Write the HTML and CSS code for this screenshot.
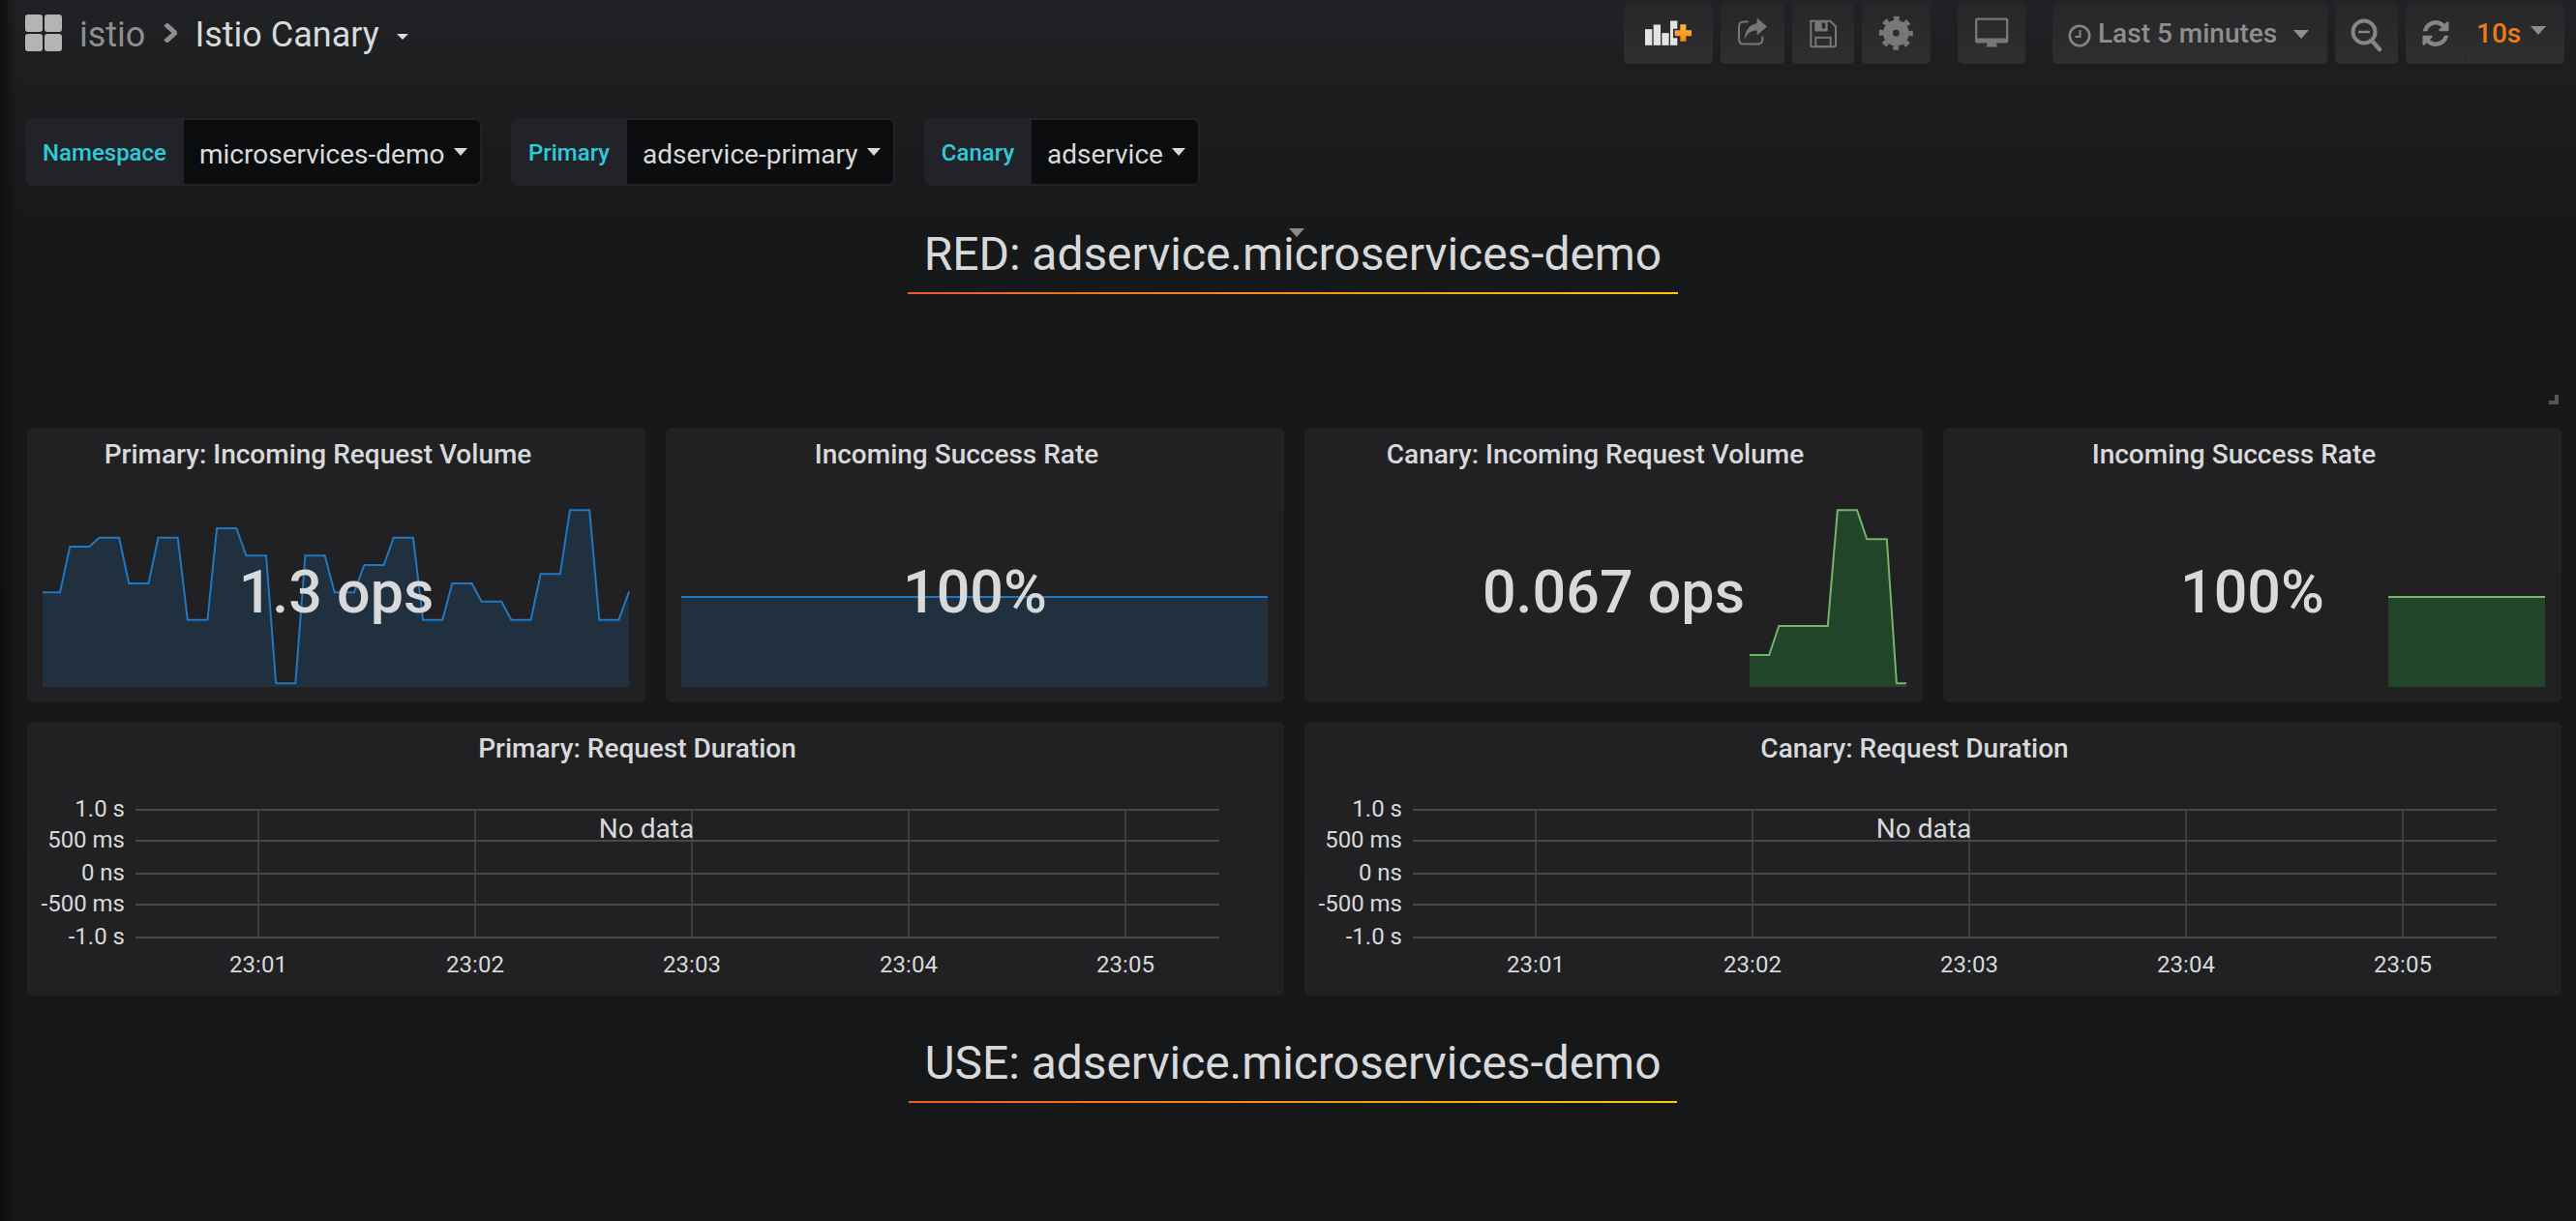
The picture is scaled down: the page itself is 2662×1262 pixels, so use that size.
FILE: index.html
```html
<!DOCTYPE html>
<html lang="en">
<head>
<meta charset="utf-8">
<title>Istio Canary</title>
<link rel="stylesheet" href="styles.css">
</head>
<body>
<header class="navbar">
  <div class="crumbs">
    <svg class="logo" viewBox="0 0 38 38"><rect x="0" y="0" width="18" height="18" rx="3"/><rect x="20" y="0" width="18" height="18" rx="3"/><rect x="0" y="20" width="18" height="18" rx="3"/><rect x="20" y="20" width="18" height="18" rx="3"/></svg>
    <span class="crumb-folder">istio</span>
    <svg class="crumb-chevron" viewBox="0 0 14 20"><path d="M2 1l10 9-10 9" /></svg>
    <span class="crumb-title">Istio Canary</span>
    <span class="caret crumb-caret"></span>
  </div>
  <div class="actions">
    <button class="btn btn-add"><svg viewBox="24 6 276 191"><g fill="#e3e3e3"><rect x="90" y="90" width="22" height="50"/><rect x="116" y="76" width="22" height="64"/><rect x="142" y="102" width="22" height="38"/><rect x="168" y="64" width="22" height="76"/></g><path d="M194 72h28v17h15v28h-15v15h-28v-15h-17v-28h17z" fill="#2b2b2e"/><path d="M199 75h18v18h17v18h-17v17h-18v-17h-17v-18h17z" fill="url(#plus)"/><defs><linearGradient id="plus" x1="0" y1="0" x2="0" y2="1"><stop offset="0" stop-color="#ffb53f"/><stop offset="1" stop-color="#f58a12"/></linearGradient></defs></svg></button>
    <button class="btn btn-share"><svg viewBox="324 6 198 191"><path d="M410 67h-14q-15 0-15 15v39q0 15 15 15h43q15 0 15-15v-9" fill="none" stroke="#777" stroke-width="6"/><path d="M437 55l31 27-31 27V94c-20-1-31 10-39 30 1-28 14-50 39-52z" fill="#777"/></svg></button>
    <button class="btn btn-save"><svg viewBox="546 6 192 191"><path d="M604 65h60l17 17v58q0 4-4 4h-70q-3 0-3-3z" fill="none" stroke="#777" stroke-width="6"/><path d="M616 66h40v28q0 3-3 3h-34q-3 0-3-3z" fill="#777"/><rect x="638" y="70" width="11" height="18" fill="#2b2b2e"/><rect x="619" y="116" width="46" height="28" fill="none" stroke="#777" stroke-width="6"/></svg></button>
    <button class="btn btn-gear"><svg viewBox="762 6 213 191"><circle cx="868" cy="102" r="25" fill="none" stroke="#777" stroke-width="30"/><circle cx="868" cy="102" r="44" fill="none" stroke="#777" stroke-width="17" stroke-dasharray="17 17.56" stroke-dashoffset="8.5"/></svg></button>
    <button class="btn btn-tv"><svg viewBox="1059 6 210 191"><rect x="1113" y="55" width="103" height="78" rx="7" fill="#777"/><rect x="1120" y="62" width="89" height="56" fill="#2b2b2e"/><path d="M1150 130h30v10l3 5h-36l3-5z" fill="#777"/></svg></button>
    <button class="btn btn-time">
      <svg class="clock" viewBox="0 0 24 24"><circle cx="12" cy="12" r="10.2" fill="none" stroke="#858585" stroke-width="2.6"/><path d="M12.5 6v7H7.5" fill="none" stroke="#858585" stroke-width="2"/></svg>
      <span class="time-label">Last 5 minutes</span>
      <span class="caret time-caret"></span>
    </button>
    <button class="btn btn-zoom"><svg viewBox="0 0 65 64"><circle cx="30" cy="31" r="11.5" fill="none" stroke="#858585" stroke-width="4"/><path d="M38 40l8 9" stroke="#858585" stroke-width="4.5" stroke-linecap="round"/><path d="M24 31h12" stroke="#858585" stroke-width="2.5"/></svg></button>
    <div class="btn btn-refresh">
      <button class="refresh-icon"><svg viewBox="128 128 1536 1536"><path fill="#858585" d="M1639 1056q0 5-1 7-64 268-268 434.5t-478 166.5q-146 0-282.5-55t-243.5-157l-129 129q-19 19-45 19t-45-19-19-45v-448q0-26 19-45t45-19h448q26 0 45 19t19 45-19 45l-137 137q71 66 161 102t187 36q134 0 250-65t186-179q11-17 53-117 8-23 30-23h192q13 0 22.5 9.5t9.5 22.5zm25-800v448q0 26-19 45t-45 19h-448q-26 0-45-19t-19-45 19-45l138-138q-148-137-349-137-134 0-250 65t-186 179q-11 17-53 117-8 23-30 23h-199q-13 0-22.5-9.5t-9.5-22.5v-7q65-268 270-434.5t480-166.5q146 0 284 55.5t245 156.5l130-129q19-19 45-19t45 19 19 45z"/></svg></button>
      <button class="refresh-rate"><span>10s</span><span class="caret rate-caret"></span></button>
    </div>
  </div>
</header>

<section class="vars">
  <div class="var var-ns"><span class="var-label">Namespace</span><span class="var-value">microservices-demo<span class="caret var-caret"></span></span></div>
  <div class="var var-primary"><span class="var-label">Primary</span><span class="var-value">adservice-primary<span class="caret var-caret"></span></span></div>
  <div class="var var-canary"><span class="var-label">Canary</span><span class="var-value">adservice<span class="caret var-caret"></span></span></div>
</section>

<section class="text-panel">
  <span class="caret drop-mark"></span>
  <h2 class="banner">RED: adservice.microservices-demo</h2>
  <span class="resize-handle"></span>
</section>

<main class="grid">
  <article class="panel stat">
    <h3 class="panel-title">Primary: Incoming Request Volume</h3>
    <svg class="spark spark-wide" viewBox="57 210 1440 630" preserveAspectRatio="none"><path class="fill-blue" d="M57 840V547H100L124 405H172L196 377H245L269 519H317L341 377H389L413 632H462L485 348H533L557 433H606L630 829H678L702 433H750L774 547H822L847 462H895L919 377H967L991 632H1039L1063 519H1111L1135 575H1184L1208 632H1256L1280 490H1328L1352 292H1400L1424 632H1472L1497 545V840Z"/><path class="line-blue" d="M57 547H100L124 405H172L196 377H245L269 519H317L341 377H389L413 632H462L485 348H533L557 433H606L630 829H678L702 433H750L774 547H822L847 462H895L919 377H967L991 632H1039L1063 519H1111L1135 575H1184L1208 632H1256L1280 490H1328L1352 292H1400L1424 632H1472L1497 545"/></svg>
    <div class="stat-value">1.3 ops</div>
  </article>
  <article class="panel stat">
    <h3 class="panel-title">Incoming Success Rate</h3>
    <svg class="spark spark-wide" viewBox="57 210 1440 630" preserveAspectRatio="none"><path class="fill-blue" d="M57 840V561H1497V840Z"/><path class="line-blue" d="M57 561H1497"/></svg>
    <div class="stat-value">100%</div>
  </article>
  <article class="panel stat">
    <h3 class="panel-title">Canary: Incoming Request Volume</h3>
    <svg class="spark spark-narrow" viewBox="1112 210 385 630" preserveAspectRatio="none"><path class="fill-green" d="M1112 840V741H1160L1184 651H1304L1328 292H1376L1400 382H1449L1473 829H1497V840Z"/><path class="line-green" d="M1112 741H1160L1184 651H1304L1328 292H1376L1400 382H1449L1473 829H1497"/></svg>
    <div class="stat-value">0.067 ops</div>
  </article>
  <article class="panel stat">
    <h3 class="panel-title">Incoming Success Rate</h3>
    <svg class="spark spark-narrow" viewBox="1112 210 385 630" preserveAspectRatio="none"><path class="fill-green" d="M1112 840V561H1497V840Z"/><path class="line-green" d="M1112 561H1497"/></svg>
    <div class="stat-value">100%</div>
  </article>

  <article class="panel graph">
    <h3 class="panel-title">Primary: Request Duration</h3>
    <svg class="chart" viewBox="0 46 1299 237">
      <g class="grid-h"><path d="M112 91H1232"/><path d="M112 123H1232"/><path d="M112 157H1232"/><path d="M112 189H1232"/><path d="M112 223H1232"/></g>
      <g class="grid-v"><path d="M239 90V223"/><path d="M463 90V223"/><path d="M687 90V223"/><path d="M911 90V223"/><path d="M1135 90V223"/></g>
      <g class="axis-y"><text x="101" y="98">1.0 s</text><text x="101" y="130">500 ms</text><text x="101" y="164">0 ns</text><text x="101" y="196">-500 ms</text><text x="101" y="230">-1.0 s</text></g>
      <g class="axis-x"><text x="239" y="259">23:01</text><text x="463" y="259">23:02</text><text x="687" y="259">23:03</text><text x="911" y="259">23:04</text><text x="1135" y="259">23:05</text></g>
      <text class="no-data" x="640" y="120">No data</text>
    </svg>
  </article>
  <article class="panel graph">
    <h3 class="panel-title">Canary: Request Duration</h3>
    <svg class="chart" viewBox="0 46 1299 237">
      <g class="grid-h"><path d="M112 91H1232"/><path d="M112 123H1232"/><path d="M112 157H1232"/><path d="M112 189H1232"/><path d="M112 223H1232"/></g>
      <g class="grid-v"><path d="M239 90V223"/><path d="M463 90V223"/><path d="M687 90V223"/><path d="M911 90V223"/><path d="M1135 90V223"/></g>
      <g class="axis-y"><text x="101" y="98">1.0 s</text><text x="101" y="130">500 ms</text><text x="101" y="164">0 ns</text><text x="101" y="196">-500 ms</text><text x="101" y="230">-1.0 s</text></g>
      <g class="axis-x"><text x="239" y="259">23:01</text><text x="463" y="259">23:02</text><text x="687" y="259">23:03</text><text x="911" y="259">23:04</text><text x="1135" y="259">23:05</text></g>
      <text class="no-data" x="640" y="120">No data</text>
    </svg>
  </article>
</main>

<section class="text-panel text-panel-use">
  <h2 class="banner">USE: adservice.microservices-demo</h2>
</section>
</body>
</html>
```

FILE: styles.css
```css
* { box-sizing: border-box; }
html, body { height: 100%; }
body {
  margin: 0;
  overflow: hidden;
  color: #d8d9da;
  font-family: Roboto, "Liberation Sans", sans-serif;
  background:
    linear-gradient(90deg, #0e0f10 0, rgba(14, 15, 16, 0) 18px),
    linear-gradient(180deg, #212225 0, #1d1e20 70px, #17181a 230px, #161719 100%);
}

/* top bar */
.navbar {
  display: flex;
  justify-content: space-between;
  align-items: center;
  height: 68px;
  padding: 2px 12px 2px 26px;
}
.crumbs { display: flex; align-items: center; }
.logo { width: 38px; height: 38px; fill: #b4b4b4; margin-right: 18px; }
.crumb-folder, .crumb-title { font-size: 36px; line-height: 42px; padding-top: 3px; }
.crumb-folder { color: #8e8e8e; }
.crumb-title { color: #d8d9da; }
.crumb-chevron { width: 14px; height: 20px; margin: 0 18px 0 19px; }
.crumb-chevron path { fill: none; stroke: #8e8e8e; stroke-width: 5; }
.caret {
  display: inline-block;
  width: 0;
  height: 0;
  border-style: solid;
  border-color: #d8d9da transparent transparent;
}
.crumb-caret { border-width: 6px 6px 0; margin: 8px 0 0 18px; }

.actions { display: flex; align-items: center; }
.btn {
  display: flex;
  align-items: center;
  height: 64px;
  padding: 0;
  margin-left: 8px;
  border: 0;
  border-radius: 5px;
  background: linear-gradient(180deg, #262628, #2f2f32);
  font-family: inherit;
}
.btn > svg { display: block; width: 100%; height: 100%; }
.btn-add { width: 92px; margin-left: 0; }
.btn-share { width: 66px; }
.btn-save { width: 64px; }
.btn-gear { width: 71px; }
.btn-tv { width: 70px; margin-left: 28px; }
.btn-time { width: 284px; margin-left: 28px; padding-left: 16px; color: #8e8e8e; }
.btn-time > svg.clock { width: 24px; height: 24px; margin-top: 6px; flex: none; }
.time-label { margin-left: 7px; font-size: 28px; font-weight: 500; white-space: nowrap; }
.time-caret { border-width: 9px 8px 0; border-top-color: #8e8e8e; margin: 3px 0 0 17px; }
.btn-zoom { width: 65px; }
.btn-refresh { width: 164px; }
.refresh-icon, .refresh-rate {
  display: flex;
  align-items: center;
  height: 100%;
  padding: 0;
  border: 0;
  background: none;
  font-family: inherit;
}
.refresh-icon { width: 63px; justify-content: center; border-right: 1px solid #29292b; }
.refresh-icon svg { width: 28px; height: 27px; }
.refresh-rate { padding-left: 10px; color: #eb7b18; font-size: 28px; font-weight: 500; }
.rate-caret { border-width: 9px 8px 0; border-top-color: #8e8e8e; margin: -6px 0 0 10px; }

/* template variables */
.vars { display: flex; gap: 30px; margin: 54px 0 0 26px; }
.var {
  display: flex;
  height: 70px;
  border: 2px solid #222328;
  border-radius: 8px;
  background: #222328;
}
.var-ns { width: 472px; }
.var-primary { width: 397px; }
.var-canary { width: 285px; }
.var-label {
  display: flex;
  align-items: center;
  justify-content: center;
  flex: none;
  padding: 1px 2px 0 0;
  color: #2bcbdc;
  font-size: 24px;
  font-weight: 500;
}
.var-ns .var-label { width: 162px; }
.var-primary .var-label { width: 118px; }
.var-canary .var-label { width: 109px; }
.var-value {
  display: flex;
  flex: 1;
  align-items: center;
  padding: 4px 13px 0 16px;
  border-radius: 0 5px 5px 0;
  background: #0b0c0e;
  color: #d8d9da;
  font-size: 28px;
  white-space: nowrap;
}
.var-caret { border-width: 8px 7px 0; margin: -4px 0 0 auto; }

/* text panels */
.text-panel {
  position: relative;
  height: 184px;
  margin: 42px 15px 0 28px;
  padding-right: 3px;
  text-align: center;
}
.text-panel-use { height: auto; margin-top: 41px; }
.banner {
  display: inline-block;
  margin: 0;
  padding: 0 17px 10px;
  border-bottom: 2px solid;
  border-image: linear-gradient(90deg, #f05a28, #fbca0a) 1;
  color: #d8d9da;
  font-size: 48px;
  font-weight: 400;
  letter-spacing: -0.07px;
  line-height: 58px;
  white-space: nowrap;
}
.drop-mark {
  position: absolute;
  top: 2px;
  left: 1304px;
  z-index: 1;
  border-width: 9px 8px 0;
  border-top-color: #8a8a8a;
}
.resize-handle {
  position: absolute;
  right: 3px;
  bottom: 0;
  width: 10px;
  height: 10px;
  border-right: 4px solid #555;
  border-bottom: 4px solid #555;
  clip-path: polygon(100% 0, 100% 100%, 0 100%, 0 60%, 60% 60%, 60% 0);
}

/* panels */
.grid {
  display: grid;
  grid-template-columns: repeat(4, 639px);
  grid-template-rows: 284px 283px;
  column-gap: 21px;
  row-gap: 20px;
  margin: 24px 15px 0 28px;
}
.panel {
  position: relative;
  border-radius: 6px;
  background: #212124;
  overflow: hidden;
}
.graph { grid-column: span 2; }
.panel-title {
  margin: 0;
  padding: 10px 38px 0 0;
  color: #d8d9da;
  font-size: 28px;
  font-weight: 500;
  line-height: 36px;
  text-align: center;
}
.stat-value {
  position: relative;
  margin-top: 89px;
  color: #d8d9da;
  font-size: 61px;
  font-weight: 500;
  line-height: 70px;
  text-align: center;
}
.spark {
  position: absolute;
  right: 17px;
  bottom: 16px;
  height: 210px;
  overflow: visible;
}
.spark-wide { width: 606px; }
.spark-narrow { width: 162px; }
.fill-blue { fill: #20303f; }
.line-blue, .line-green {
  fill: none;
  stroke-width: 2px;
  vector-effect: non-scaling-stroke;
}
.line-blue { stroke: #1f78c1; }
.fill-green { fill: #224428; }
.line-green { stroke: #73b56a; }

.chart { display: block; width: 1299px; height: 237px; }
.grid-h path, .grid-v path { fill: none; stroke-width: 2px; }
.grid-h path { stroke: #48484a; }
.grid-v path { stroke: #464648; stroke-width: 1.5px; }
.axis-y text, .axis-x text { fill: #d8d9da; font-size: 24px; }
.axis-y text { text-anchor: end; }
.axis-x text { text-anchor: middle; }
.no-data { fill: #d8d9da; font-size: 28px; text-anchor: middle; }
```
